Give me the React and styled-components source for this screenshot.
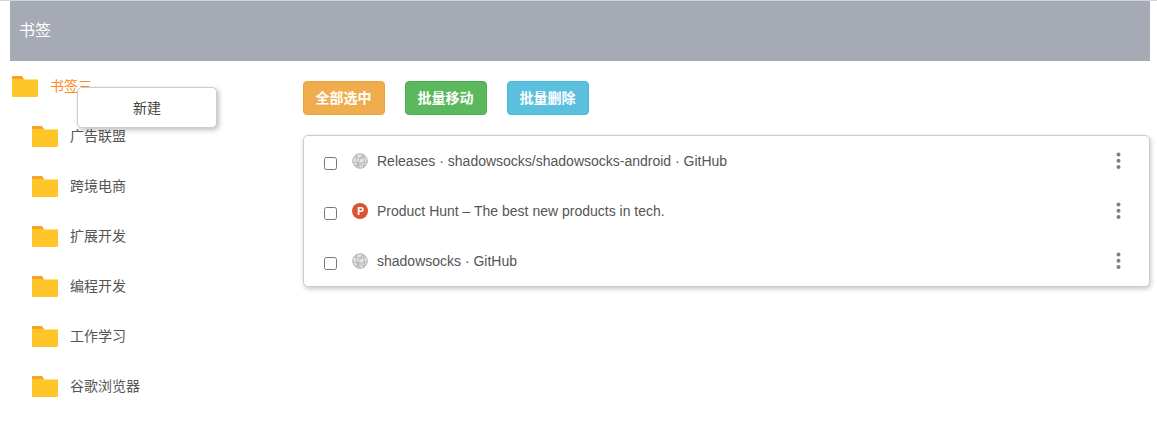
import React from "react";
import styled, { createGlobalStyle } from "styled-components";

const Global = createGlobalStyle`
  html, body { margin: 0; padding: 0; background: #fff; }
  body { font-family: "Liberation Sans", Arial, "Noto Sans CJK SC", sans-serif; }
`;
const Page = styled.div`
  padding: 1px 7px 0 10px;
  height: 425px;
  position: relative;
  box-sizing: border-box;
  &::before { content: ""; position: absolute; left: 0; right: 0; top: 0; height: 1px; background: #d4d4d4; }
`;
const Header = styled.header`
  height: 60px;
  background: #a6aab5;
  color: #fff;
  font-size: 16px;
  line-height: 60px;
  padding-left: 9px;
`;
const Body = styled.div`
  display: flex;
`;
const Sidebar = styled.nav`
  width: 293px;
  flex: none;
  position: relative;
`;
const TreeRow = styled.div`
  height: 50px;
  display: flex;
  align-items: center;
  margin-left: ${p => (p.$child ? 20 : 0)}px;
  padding-left: 2px;
  gap: 12px;
  font-size: 14px;
  color: ${p => (p.$active ? "#ff8c1a" : "#555")};
  & > svg { margin-top: 1px; }
  & > span { margin-top: -2px; }
`;
const Menu = styled.div`
  position: absolute;
  left: 67px;
  top: 26px;
  width: 138px;
  height: 37px;
  padding-bottom: 2px;
  border: 1px solid #ccc;
  border-radius: 5px;
  background: #fff;
  box-shadow: 2px 2px 5px rgba(0,0,0,.25);
  display: flex;
  align-items: center;
  justify-content: center;
  font-size: 14px;
  color: #444;
`;
const Main = styled.main`
  flex: 1;
  min-width: 0;
  padding-top: 20px;
`;
const Toolbar = styled.div`
  display: flex;
  gap: 20px;
  margin-bottom: 20px;
`;
const ActionButton = styled.button`
  width: 82px;
  height: 34px;
  padding: 0 1px 3px 0;
  border: 1px solid ${p => p.$border};
  border-radius: 4px;
  background: ${p => p.$bg};
  color: #fff;
  font: bold 14px "Liberation Sans", "Noto Sans CJK SC", sans-serif;
`;
const Card = styled.section`
  border: 1px solid #ccc;
  border-radius: 5px;
  box-shadow: 1px 2px 5px rgba(0,0,0,.22);
  background: #fff;
`;
const Row = styled.div`
  height: 50px;
  display: flex;
  align-items: center;
  padding-left: 20px;
  padding-right: 28px;
  font-size: 14px;
  color: #555;
`;
const Check = styled.input.attrs({ type: "checkbox" })`
  width: 13px;
  height: 13px;
  margin: 4px 0 0;
  flex: none;
`;
const Fav = styled.svg`
  width: 16px;
  height: 16px;
  margin: 0 9px 0 15px;
  flex: none;
`;
const Title = styled.span`
  flex: 1;
  white-space: nowrap;
`;
const More = styled.svg`
  width: 5px;
  height: 18px;
  flex: none;
`;

const Folder = () => (
  <svg width="26" height="21" viewBox="0 0 26 21">
    <path d="M0 1a1 1 0 0 1 1-1h9l2 3H0z" fill="#fb9f26" />
    <path d="M0 3h25a1 1 0 0 1 1 1v16a1 1 0 0 1-1 1H1a1 1 0 0 1-1-1z" fill="#ffc629" />
    <path d="M12 3h14v1H12z" fill="#ffe08a" />
  </svg>
);
const Globe = () => (
  <Fav viewBox="0 0 16 16" fill="none" stroke="#b4b4b4" strokeWidth="1">
    <circle cx="8" cy="8" r="7.3" fill="#e4e4e4" />
    <path d="M2.5 3.5c3 2 8 2 11 0M.8 8.5c4 2.2 10 2.2 14.4 0M3 13c3-1.5 7-1.5 10 0M5 1.2C3.2 6 5 11 8.5 15.5M11 1.2C8 5 6 10 5.3 14.8M10.5 1c2 4 2.5 9 1 14" />
  </Fav>
);
const Hunt = () => (
  <Fav viewBox="0 0 16 16">
    <circle cx="8" cy="8" r="8" fill="#da552f" />
    <path d="M5.7 4h3.5a2.5 2.5 0 0 1 0 5H7.5v3H5.7zM7.5 5.6v1.9h1.6a.95.95 0 0 0 0-1.9z" fill="#fff" fillRule="evenodd" />
  </Fav>
);
const Dots = () => (
  <More viewBox="0 0 5 18" fill="#808080">
    <circle cx="2.5" cy="2.5" r="2" />
    <circle cx="2.5" cy="8.8" r="2" />
    <circle cx="2.5" cy="15" r="2" />
  </More>
);

const folders = ["广告联盟", "跨境电商", "扩展开发", "编程开发", "工作学习", "谷歌浏览器"];
const rows = [
  [Globe, "Releases · shadowsocks/shadowsocks-android · GitHub"],
  [Hunt, "Product Hunt – The best new products in tech."],
  [Globe, "shadowsocks · GitHub"],
];

export default function App() {
  return (
    <Page>
      <Global />
      <Header>书签</Header>
      <Body>
        <Sidebar>
          <TreeRow $active><Folder /><span>书签三</span></TreeRow>
          {folders.map(f => (
            <TreeRow $child key={f}><Folder /><span>{f}</span></TreeRow>
          ))}
          <Menu>新建</Menu>
        </Sidebar>
        <Main>
          <Toolbar>
            <ActionButton $bg="#f0ad4e" $border="#eea236">全部选中</ActionButton>
            <ActionButton $bg="#5cb85c" $border="#4cae4c">批量移动</ActionButton>
            <ActionButton $bg="#5bc0de" $border="#46b8da">批量删除</ActionButton>
          </Toolbar>
          <Card>
            {rows.map(([Icon, text]) => (
              <Row key={text}>
                <Check />
                <Icon />
                <Title>{text}</Title>
                <Dots />
              </Row>
            ))}
          </Card>
        </Main>
      </Body>
    </Page>
  );
}
